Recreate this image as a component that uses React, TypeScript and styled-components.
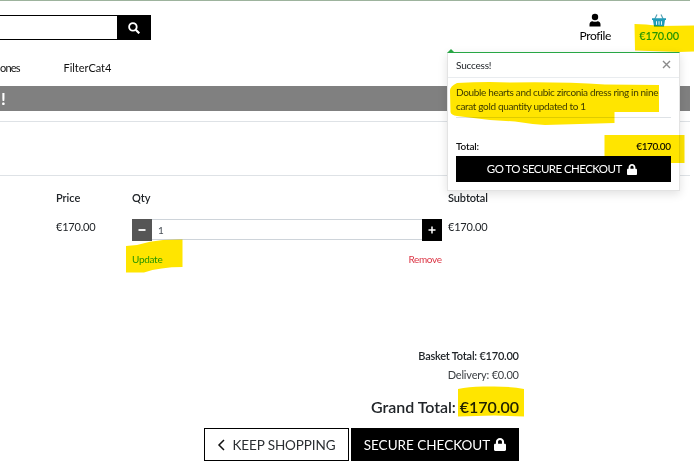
import React from "react";
import styled, { createGlobalStyle } from "styled-components";

const GlobalStyle = createGlobalStyle`
  * { box-sizing: border-box; }
  html, body { margin: 0; background: #fff; overflow: hidden; }
  body { font-family: Lato, "Liberation Sans", sans-serif; font-size: 11px; color: #212529; }
`;

const Page = styled.div`
  position: relative;
  width: 694px;
  height: 462px;
  padding-right: 4px;
  overflow: hidden;
`;

const Text = styled.span<{ $size?: number; $weight?: number; $track?: number; $color?: string }>`
  font-size: ${(p) => p.$size ?? 11}px;
  font-weight: ${(p) => p.$weight ?? 400};
  letter-spacing: ${(p) => p.$track ?? 0}px;
  margin-right: ${(p) => -(p.$track ?? 0)}px;
  color: ${(p) => p.$color ?? "inherit"};
  line-height: 16px;
  white-space: nowrap;
`;

const Header = styled.header`
  display: flex;
  align-items: flex-start;
  justify-content: space-between;
  height: 50px;
  border-top: 1px solid #9db39d;
`;

const Search = styled.div`
  display: flex;
  width: 151px;
  height: 25px;
  margin-top: 14px;
  border: 1px solid #000;
  border-left: 0;
`;

const SearchField = styled.div`
  flex: 1;
`;

const SearchButton = styled.button`
  display: flex;
  align-items: center;
  justify-content: center;
  width: 33px;
  padding: 0;
  border: 0;
  background: #000;
`;

const Account = styled.div`
  display: flex;
  gap: 28px;
  padding: 12px 11px 0 0;
`;

const AccountItem = styled.a`
  display: flex;
  flex-direction: column;
  align-items: center;
  svg { display: block; height: 15px; }
  span { line-height: 16px; }
`;

const Nav = styled.nav`
  display: flex;
  align-items: center;
  gap: 43px;
  height: 36px;
  color: #111;
`;

const Banner = styled.div`
  display: flex;
  align-items: center;
  height: 25px;
  padding-left: 1px;
  background: #808080;
`;

const Title = styled.div`
  height: 55px;
  margin-top: 10px;
  border: solid #dee2e6;
  border-width: 1px 0;
`;

const Basket = styled.section`
  display: grid;
  grid-template-columns: 76px 310px 1fr;
  padding: 14px 0 0 56px;
  height: 172px;
`;

const Column = styled.div<{ $inset?: number }>`
  display: flex;
  flex-direction: column;
  gap: 13px;
  padding-left: ${(p) => p.$inset ?? 0}px;
`;

const Stepper = styled.div`
  display: flex;
  height: 22px;
`;

const StepButton = styled.button<{ $bg: string }>`
  display: flex;
  align-items: center;
  justify-content: center;
  width: 20px;
  padding: 0;
  border: 0;
  background: ${(p) => p.$bg};
`;

const Quantity = styled.div`
  display: flex;
  align-items: center;
  flex: 1;
  height: 21px;
  padding-left: 6px;
  border: solid #ced4da;
  border-width: 1px 0;
  color: #495057;
`;

const QuantityColumn = styled.div`
  display: flex;
  flex-direction: column;
`;

const RowActions = styled.div`
  display: flex;
  justify-content: space-between;
  margin-top: 10px;
`;

const Totals = styled.section`
  display: flex;
  flex-direction: column;
  align-items: flex-end;
  gap: 3px;
  width: 519px;
`;

const GrandTotal = styled.div`
  display: flex;
  align-items: center;
  height: 30px;
  margin-top: 6px;
`;

const Actions = styled.div`
  display: flex;
  gap: 2px;
  margin-top: 3px;
`;

const ActionButton = styled.button<{ $solid?: boolean; $width: number }>`
  display: flex;
  align-items: center;
  justify-content: center;
  gap: ${(p) => (p.$solid ? 4 : 6)}px;
  width: ${(p) => p.$width}px;
  height: 33px;
  padding: 0;
  border: 1px solid #000;
  background: ${(p) => (p.$solid ? "#000" : "#fff")};
  color: ${(p) => (p.$solid ? "#fff" : "#2b2f33")};
  font-family: inherit;
`;

const Popup = styled.aside`
  position: absolute;
  left: 447px;
  top: 52px;
  width: 233px;
  height: 139px;
  border: 1px solid #e3e3e3;
  border-top-color: #28a745;
  background: #fff;
  box-shadow: 0 3px 9px rgba(0, 0, 0, 0.12);
  &::before {
    content: "";
    position: absolute;
    left: 0;
    top: -4px;
    border: solid transparent;
    border-width: 0 3px 3px;
    border-bottom-color: #28a745;
  }
`;

const PopupHeader = styled.div`
  display: flex;
  align-items: center;
  justify-content: space-between;
  height: 25px;
  padding: 0 8px 1px;
  border-bottom: 1px solid #e9ecef;
`;

const PopupBody = styled.div`
  padding: 7px 8px 0;
`;

const Message = styled.div`
  display: flex;
  flex-direction: column;
  height: 33px;
  border-bottom: 1px solid #dee2e6;
  color: #404448;
  span { line-height: 14px; }
`;

const PopupTotal = styled.div`
  display: flex;
  justify-content: space-between;
  margin-top: 20px;
  height: 18px;
  color: #111;
`;

const CheckoutButton = styled.button`
  display: flex;
  align-items: center;
  justify-content: center;
  gap: 5px;
  width: 100%;
  height: 26px;
  padding: 0 3px 0 0;
  border: 0;
  background: #000;
  color: #fff;
  font-family: inherit;
`;

const Marker = styled.svg`
  position: absolute;
  left: 0;
  top: 0;
  mix-blend-mode: multiply;
  pointer-events: none;
`;

const Lock = ({ w = 10, h = 11 }: { w?: number; h?: number }) => (
  <svg width={w} height={h} viewBox="0 0 448 512" fill="#fff" preserveAspectRatio="none">
    <path d="M400 224h-24v-72C376 68.200 307.800 0 224 0S72 68.200 72 152v72H48c-26.500 0-48 21.500-48 48v192c0 26.500 21.500 48 48 48h352c26.500 0 48-21.500 48-48V272c0-26.500-21.500-48-48-48zm-104 0H152v-72c0-39.700 32.300-72 72-72s72 32.300 72 72v72z" />
  </svg>
);

export default function App() {
  return (
    <>
      <GlobalStyle />
      <Page>
        <Header>
          <Search>
            <SearchField />
            <SearchButton aria-label="Search">
              <svg width="12" height="12" viewBox="0 0 12 12" fill="none" stroke="#fff" strokeWidth="1.8">
                <circle cx="4.900" cy="4.900" r="3.800" />
                <path d="M7.700 7.700 11.300 11.300" strokeWidth="2.200" />
              </svg>
            </SearchButton>
          </Search>
          <Account>
            <AccountItem>
              <svg width="12" viewBox="0 0 12 15" fill="#000">
                <circle cx="6" cy="4" r="3.200" />
                <path d="M0.500 13.500V11.500Q0.500 8.500 3.500 8.200Q6 9.300 8.500 8.200Q11.500 8.500 11.500 11.500V13.500Z" />
              </svg>
              <Text $size={12} $track={-0.4} $color="#000">Profile</Text>
            </AccountItem>
            <AccountItem>
              <svg width="16" viewBox="0 0 16 15">
                <path d="M3.800 6 6 1.500M12.200 6 10 1.500" stroke="#5aa3b5" strokeWidth="1.200" fill="none" />
                <path d="M1 5.200h14v1.900h-1L13 13.500H3L2 7.100H1z" fill="#1f9bb8" />
                <path d="M5.500 8.200v3.600M8 8.200v3.600M10.500 8.200v3.600" stroke="#fff" strokeWidth=".9" />
              </svg>
              <Text $weight={600} $track={-0.2} $color="#28a745">€170.00</Text>
            </AccountItem>
          </Account>
        </Header>
        <Nav>
          <Text $track={-0.8}>ones</Text>
          <Text $track={-0.05}>FilterCat4</Text>
        </Nav>
        <Banner>
          <Text $size={17} $weight={700} $color="#fff">!</Text>
        </Banner>
        <Title />
        <Basket>
          <Column>
            <Text $weight={600} $track={-0.05}>Price</Text>
            <Text $track={-0.2}>€170.00</Text>
          </Column>
          <QuantityColumn>
            <Column>
              <Text $weight={600}>Qty</Text>
              <Stepper>
                <StepButton $bg="#555" aria-label="Decrease">
                  <svg width="8" height="8"><path d="M.5 4h7" stroke="#fff" strokeWidth="1.800" /></svg>
                </StepButton>
                <Quantity><Text $size={10}>1</Text></Quantity>
                <StepButton $bg="#000" aria-label="Increase">
                  <svg width="8" height="8"><path d="M.5 4h7M4 .5v7" stroke="#fff" strokeWidth="1.500" /></svg>
                </StepButton>
              </Stepper>
            </Column>
            <RowActions>
              <Text $size={10} $track={-0.3} $color="#28a745">Update</Text>
              <Text $size={10} $track={-0.35} $color="#dc3545">Remove</Text>
            </RowActions>
          </QuantityColumn>
          <Column $inset={6}>
            <Text $weight={600} $track={-0.1}>Subtotal</Text>
            <Text $track={-0.2}>€170.00</Text>
          </Column>
        </Basket>
        <Totals>
          <Text $weight={600} $track={-0.22}>Basket Total: €170.00</Text>
          <Text $track={-0.2} $color="#3a3e42">Delivery: €0.00</Text>
          <GrandTotal><Text $size={16} $weight={600} $track={-0.04}>Grand Total: €170.00</Text></GrandTotal>
          <Actions>
            <ActionButton $width={145}>
              <svg width="9" height="12" viewBox="0 0 9 12"><path d="M7 1 2 6l5 5" fill="none" stroke="#111" strokeWidth="1.500" /></svg>
              <Text $size={13.5} $track={-0.1}>KEEP SHOPPING</Text>
            </ActionButton>
            <ActionButton $solid $width={168}>
              <Text $size={13.5}>SECURE CHECKOUT</Text>
              <Lock w={12} h={13} />
            </ActionButton>
          </Actions>
        </Totals>
        <Popup>
          <PopupHeader>
            <Text $size={10} $track={-0.2}>Success!</Text>
            <svg width="9" height="9"><path d="M1 1l7 7M8 1 1 8" stroke="#8b8b8b" strokeWidth="1.400" /></svg>
          </PopupHeader>
          <PopupBody>
            <Message>
              <Text $size={10} $track={-0.34}>Double hearts and cubic zirconia dress ring in nine</Text>
              <Text $size={10} $track={-0.34}>carat gold quantity updated to 1</Text>
            </Message>
            <PopupTotal>
              <Text $size={10} $weight={600} $track={-0.2}>Total:</Text>
              <Text $size={10} $weight={600} $track={-0.4}>€170.00</Text>
            </PopupTotal>
            <CheckoutButton>
              <Text $size={11.5} $track={-0.56}>GO TO SECURE CHECKOUT</Text>
              <Lock />
            </CheckoutButton>
          </PopupBody>
        </Popup>
        <Marker width="694" height="462" viewBox="0 0 694 462" fill="#ffe500">
          <path d="M634.500 24 646 24.500 660 26 694 25.500V51.500L679 52 635 50.500Z" />
          <path d="M450 91Q450 86 457 83Q485 81.500 510 82.500Q560 81.500 605 84.500L659 85V112H614.500V123Q580 124 545 125Q530 124 515 121.500L490 120 457 116Q451 115 450.500 112Z" />
          <path d="M604.500 135H684.500V163H671V156H604.500Z" />
          <path d="M126 246 137 245Q150 241 163 240L182.500 239.500V267Q160 267 144 272.500H126Z" />
          <path d="M458 389Q470 386 488 386.500Q510 386 524 389V416.500L494 415.500 458 416.500Z" />
        </Marker>
      </Page>
    </>
  );
}
